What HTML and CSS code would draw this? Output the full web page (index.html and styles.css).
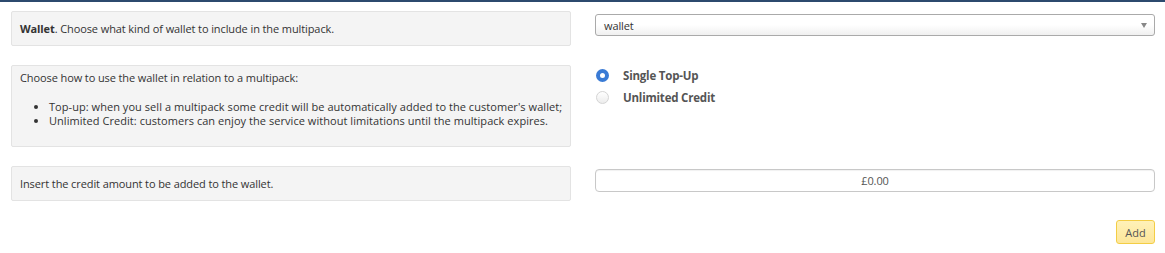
FILE: index.html
```html
<!DOCTYPE html>
<html lang="en">
<head>
    <meta charset="UTF-8">
    <title>Multipack Wallet</title>
    <link rel="stylesheet" href="styles.css">
</head>
<body>
    <div class="page">
        <!-- Wallet type -->
        <div class="row">
            <div class="help"><b>Wallet</b>. Choose what kind of wallet to include in the multipack.</div>
            <div class="field">
                <div class="select">
                    <span>wallet</span>
                    <span class="caret"></span>
                </div>
            </div>
        </div>

        <!-- Wallet usage -->
        <div class="row">
            <div class="help tall">
                <p>Choose how to use the wallet in relation to a multipack:</p>
                <ul>
                    <li>Top-up: when you sell a multipack some credit will be automatically added to the customer's wallet;</li>
                    <li>Unlimited Credit: customers can enjoy the service without limitations until the multipack expires.</li>
                </ul>
            </div>
            <div class="field radios">
                <label class="radio"><span class="dot checked"></span>Single Top-Up</label>
                <label class="radio"><span class="dot"></span>Unlimited Credit</label>
            </div>
        </div>

        <!-- Credit amount -->
        <div class="row">
            <div class="help">Insert the credit amount to be added to the wallet.</div>
            <div class="field">
                <div class="amount">£0.00</div>
            </div>
        </div>

        <div class="actions">
            <button class="add">Add</button>
        </div>
    </div>
</body>
</html>
```

FILE: styles.css
```css
body {
    margin: 0;
    font-family: "Open Sans", sans-serif;
    font-size: 11px;
    letter-spacing: -0.1px;
    color: #333;
    background: #fff;
    border-top: 2px solid #2c4a6e;
}

.page {
    padding: 9px 10px 0 11px;
}

.row {
    display: grid;
    grid-template-columns: 560px 560px;
    column-gap: 24px;
    margin-bottom: 19px;
}

.help {
    background-color: #f4f4f4;
    border: 1px solid #e3e3e3;
    border-radius: 2px;
    padding: 0 8px;
    height: 33px;
    display: flex;
    align-items: center;
}

.help.tall {
    height: 80px;
    display: block;
}

.help p {
    margin: 5px 0 0;
    line-height: 14px;
}

.help ul {
    margin: 15px 0 0;
    padding-left: 29px;
    line-height: 14px;
    letter-spacing: 0.05px;
    white-space: nowrap;
}

.field {
    padding-top: 3px;
}

.select {
    height: 20px;
    border: 1px solid #aaa;
    border-radius: 3px;
    background: linear-gradient(#fff 50%, #f0f0f0);
    display: flex;
    align-items: center;
    justify-content: space-between;
    padding: 0 7px 0 8px;
}

.caret {
    width: 0;
    height: 0;
    border-left: 3px solid transparent;
    border-right: 3px solid transparent;
    border-top: 5px solid #888;
}

.radios {
    padding-top: 0;
    margin-top: -1px;
}

.radio {
    display: flex;
    align-items: center;
    height: 22px;
    font-weight: bold;
    font-size: 11.5px;
    letter-spacing: -0.2px;
    color: #555;
}

.dot {
    width: 13px;
    height: 13px;
    border-radius: 50%;
    border: 1px solid #d4d4d4;
    background: linear-gradient(#fff, #ececec);
    margin: 0 14px 0 1px;
    box-sizing: border-box;
}

.dot.checked {
    border: 4px solid #3a7bd5;
    background: #fff;
}

.amount {
    height: 21px;
    border: 1px solid #c8c8c8;
    border-radius: 4px;
    display: flex;
    align-items: center;
    justify-content: center;
    color: #555;
    box-shadow: inset 0 1px 1px rgba(0, 0, 0, 0.06);
}

.actions {
    display: flex;
    justify-content: flex-end;
    margin-top: 3px;
}

.add {
    font-family: "Open Sans", sans-serif;
    font-size: 11px;
    color: #555;
    background: linear-gradient(#fff1b8, #fde69a);
    border: 1px solid #f3cd45;
    border-radius: 3px;
    width: 39px;
    height: 24px;
    padding: 0;
    cursor: pointer;
}
```
